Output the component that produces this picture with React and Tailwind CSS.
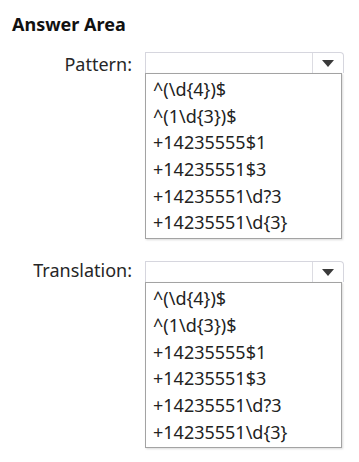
import React from "react";

const options = [
  "^(\\d{4})$",
  "^(1\\d{3})$",
  "+14235555$1",
  "+14235551$3",
  "+14235551\\d?3",
  "+14235551\\d{3}",
];

const Field = ({ label, labelOffset }) => {
  return (
    <div className="flex items-start">
      {/* label column */}
      <div
        className={`w-[120px] shrink-0 text-right text-[18px] leading-[24px] text-[#262626] ${labelOffset}`}
      >
        {label}
      </div>

      <div className="ml-[13px] flex flex-col">
        {/* closed select */}
        <div className="flex h-[21px] w-[199px] rounded-tr-[4px] border border-b-0 border-[#d6d6de] bg-white">
          <div className="flex-1" />
          <div className="flex w-[31px] items-center justify-center border-l border-[#dcdce2]">
            <svg width="12" height="7" viewBox="0 0 12 7">
              <path d="M0 0 L12 0 L6 7 Z" fill="#3a3a3a" />
            </svg>
          </div>
        </div>

        {/* options list */}
        <div className="w-[197px] border border-[#a3a3a3] bg-white py-[2px] pl-[7px] shadow-[1px_1px_2px_rgba(0,0,0,0.15)]">
          {options.map((opt) => (
            <div key={opt} className="h-[26.7px] text-[18px] leading-[26.7px] text-[#222]">
              {opt}
            </div>
          ))}
        </div>
      </div>
    </div>
  );
};

export default function App() {
  return (
    <div
      className="h-[462px] w-[359px] bg-white pl-[12px] pt-[12px]"
      style={{ fontFamily: '"Noto Sans", "Open Sans", sans-serif' }}
    >
      <h2 className="text-[18px] font-bold leading-[24px] text-[#111]">Answer Area</h2>

      <div className="mt-[16px]">
        <Field label="Pattern:" labelOffset="mt-[0px]" />
      </div>

      <div className="mt-[22px]">
        <Field label="Translation:" labelOffset="-mt-[3px]" />
      </div>
    </div>
  );
}
